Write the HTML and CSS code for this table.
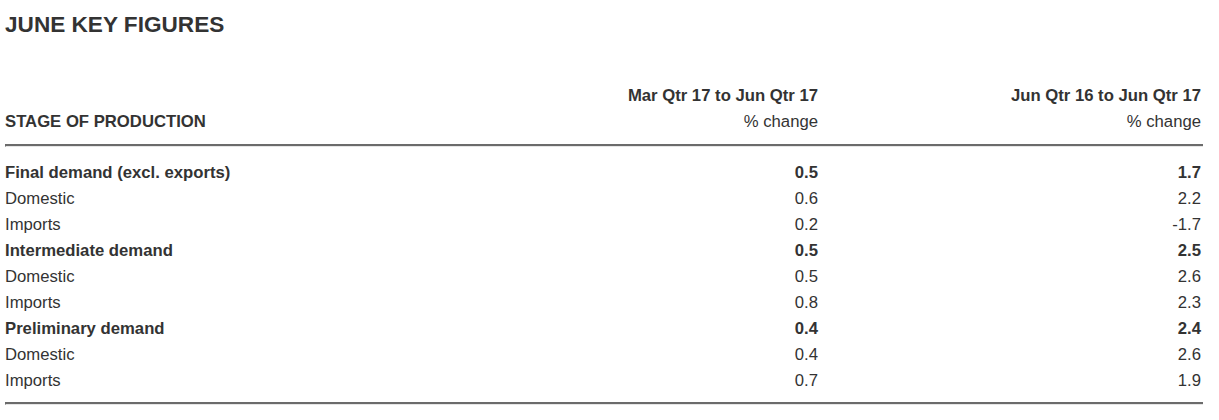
FILE: index.html
```html
<!DOCTYPE html>
<html>
<head>
<meta charset="utf-8">
<link rel="stylesheet" href="styles.css">
</head>
<body>
<div class="page">
  <h1 class="title">JUNE KEY FIGURES</h1>
  <div class="table">
    <div class="head">
      <div class="h-stage">STAGE OF PRODUCTION</div>
      <div class="h-num"><span class="h-period">Mar Qtr 17 to Jun Qtr 17</span><span class="h-unit">% change</span></div>
      <div class="h-num"><span class="h-period">Jun Qtr 16 to Jun Qtr 17</span><span class="h-unit">% change</span></div>
    </div>
    <div class="rule"></div>
    <div class="body">
      <div class="row bold"><span>Final demand (excl. exports)</span><span class="num">0.5</span><span class="num">1.7</span></div>
      <div class="row"><span>Domestic</span><span class="num">0.6</span><span class="num">2.2</span></div>
      <div class="row"><span>Imports</span><span class="num">0.2</span><span class="num">-1.7</span></div>
      <div class="row bold"><span>Intermediate demand</span><span class="num">0.5</span><span class="num">2.5</span></div>
      <div class="row"><span>Domestic</span><span class="num">0.5</span><span class="num">2.6</span></div>
      <div class="row"><span>Imports</span><span class="num">0.8</span><span class="num">2.3</span></div>
      <div class="row bold"><span>Preliminary demand</span><span class="num">0.4</span><span class="num">2.4</span></div>
      <div class="row"><span>Domestic</span><span class="num">0.4</span><span class="num">2.6</span></div>
      <div class="row"><span>Imports</span><span class="num">0.7</span><span class="num">1.9</span></div>
    </div>
    <div class="rule"></div>
  </div>
</div>
</body>
</html>
```
FILE: styles.css
```css
html, body {
  margin: 0;
  padding: 0;
  background: #fff;
}
.page {
  padding: 12px 0 0 5px;
  width: 1198px;
  font-family: "Liberation Sans", Arial, sans-serif;
  color: #333;
}
.title {
  margin: 0;
  font-size: 22.6px;
  line-height: 26px;
  font-weight: bold;
  color: #333;
}
.table {
  margin-top: 45px;
}
.head, .row {
  display: grid;
  grid-template-columns: 1fr 300px 383px;
  width: 1196px;
}
.head {
  font-size: 16.7px;
  align-items: end;
  padding-bottom: 9px;
}
.h-stage {
  font-weight: bold;
  line-height: 26px;
}
.h-num {
  display: flex;
  flex-direction: column;
  align-items: flex-end;
  line-height: 26px;
}
.h-period {
  font-weight: bold;
}
.rule {
  width: 1198px;
  box-sizing: border-box;
  height: 3px;
  border-top: 2px solid #6b6b6b;
  border-left: 1px solid #6b6b6b;
  border-bottom: 1px solid #e6e6e6;
}
.body {
  padding: 13px 0 8px;
}
.row {
  font-size: 16.7px;
  line-height: 26px;
}
.row.bold {
  font-weight: bold;
}
.num {
  text-align: right;
}
```
